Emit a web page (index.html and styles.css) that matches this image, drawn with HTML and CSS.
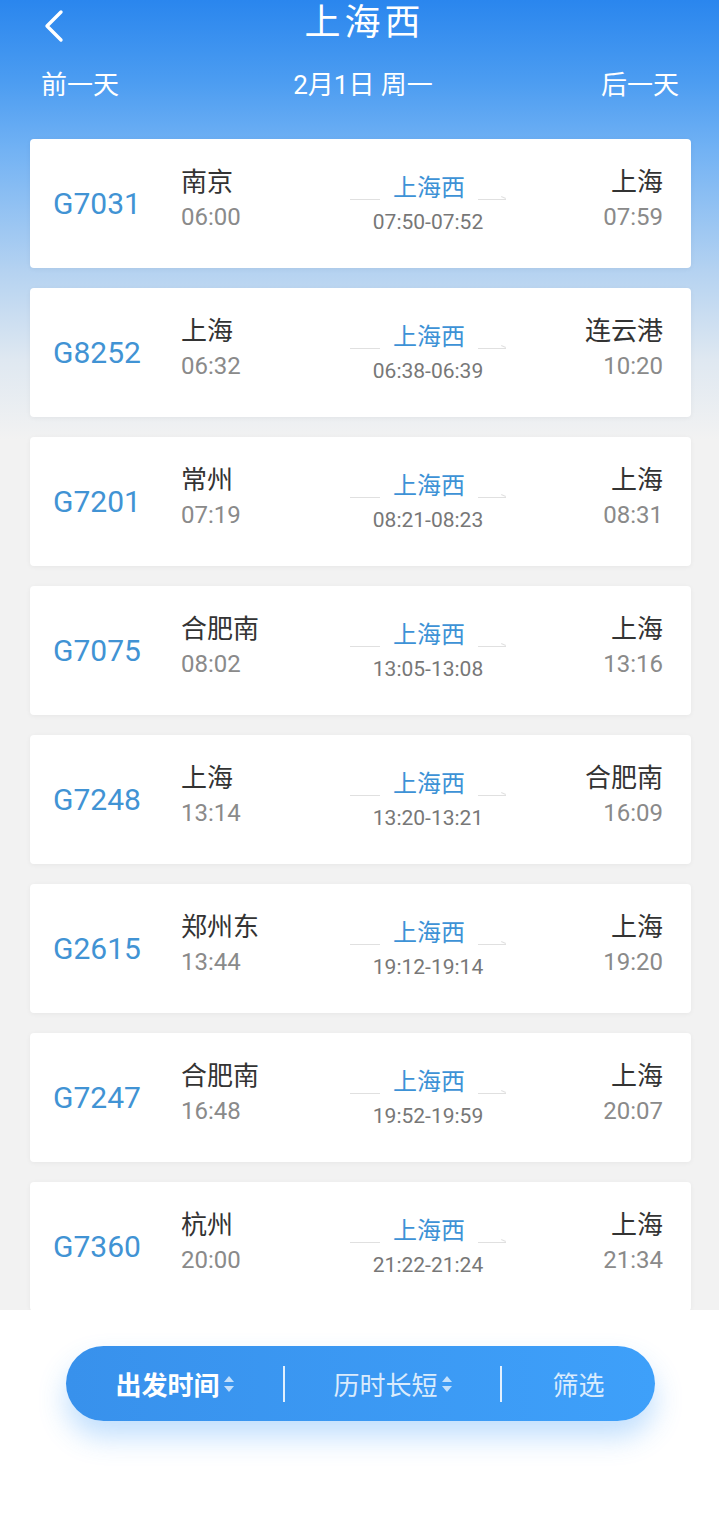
FILE: index.html
```html
<!DOCTYPE html>
<html>
<head>
  <meta charset="UTF-8">
  <title>上海西</title>
  <link rel="stylesheet" href="styles.css">
</head>
<body>
  <div class="page">
    <div class="header">
      <div class="title-row">
        <svg class="back" width="24" height="34" viewBox="0 0 24 34"><polyline points="19,3 5,17 19,31" fill="none" stroke="#fff" stroke-width="3.4" stroke-linecap="round" stroke-linejoin="round"/></svg>
        <h1>上海西</h1>
      </div>
      <div class="date-row">
        <span>前一天</span>
        <span class="date">2月1日 周一</span>
        <span>后一天</span>
      </div>
    </div>

    <div class="train-list">
      <div class="card">
        <div class="train-no">G7031</div>
        <div class="from"><p class="station">南京</p><p class="time">06:00</p></div>
        <div class="via"><div class="via-top"><span class="line"></span><span class="via-name">上海西</span><span class="line arrow"></span></div><p class="via-time">07:50-07:52</p></div>
        <div class="to"><p class="station">上海</p><p class="time">07:59</p></div>
      </div>
      <div class="card">
        <div class="train-no">G8252</div>
        <div class="from"><p class="station">上海</p><p class="time">06:32</p></div>
        <div class="via"><div class="via-top"><span class="line"></span><span class="via-name">上海西</span><span class="line arrow"></span></div><p class="via-time">06:38-06:39</p></div>
        <div class="to"><p class="station">连云港</p><p class="time">10:20</p></div>
      </div>
      <div class="card">
        <div class="train-no">G7201</div>
        <div class="from"><p class="station">常州</p><p class="time">07:19</p></div>
        <div class="via"><div class="via-top"><span class="line"></span><span class="via-name">上海西</span><span class="line arrow"></span></div><p class="via-time">08:21-08:23</p></div>
        <div class="to"><p class="station">上海</p><p class="time">08:31</p></div>
      </div>
      <div class="card">
        <div class="train-no">G7075</div>
        <div class="from"><p class="station">合肥南</p><p class="time">08:02</p></div>
        <div class="via"><div class="via-top"><span class="line"></span><span class="via-name">上海西</span><span class="line arrow"></span></div><p class="via-time">13:05-13:08</p></div>
        <div class="to"><p class="station">上海</p><p class="time">13:16</p></div>
      </div>
      <div class="card">
        <div class="train-no">G7248</div>
        <div class="from"><p class="station">上海</p><p class="time">13:14</p></div>
        <div class="via"><div class="via-top"><span class="line"></span><span class="via-name">上海西</span><span class="line arrow"></span></div><p class="via-time">13:20-13:21</p></div>
        <div class="to"><p class="station">合肥南</p><p class="time">16:09</p></div>
      </div>
      <div class="card">
        <div class="train-no">G2615</div>
        <div class="from"><p class="station">郑州东</p><p class="time">13:44</p></div>
        <div class="via"><div class="via-top"><span class="line"></span><span class="via-name">上海西</span><span class="line arrow"></span></div><p class="via-time">19:12-19:14</p></div>
        <div class="to"><p class="station">上海</p><p class="time">19:20</p></div>
      </div>
      <div class="card">
        <div class="train-no">G7247</div>
        <div class="from"><p class="station">合肥南</p><p class="time">16:48</p></div>
        <div class="via"><div class="via-top"><span class="line"></span><span class="via-name">上海西</span><span class="line arrow"></span></div><p class="via-time">19:52-19:59</p></div>
        <div class="to"><p class="station">上海</p><p class="time">20:07</p></div>
      </div>
      <div class="card">
        <div class="train-no">G7360</div>
        <div class="from"><p class="station">杭州</p><p class="time">20:00</p></div>
        <div class="via"><div class="via-top"><span class="line"></span><span class="via-name">上海西</span><span class="line arrow"></span></div><p class="via-time">21:22-21:24</p></div>
        <div class="to"><p class="station">上海</p><p class="time">21:34</p></div>
      </div>
    </div>

    <div class="footer">
      <div class="sort-bar">
        <div class="sort-item first active">出发时间<svg class="updown" width="10" height="20" viewBox="0 0 10 20"><polygon points="0,8 5,2 10,8" /><polygon points="0,12 5,18 10,12" /></svg></div>
        <span class="divider"></span>
        <div class="sort-item second">历时长短<svg class="updown" width="10" height="20" viewBox="0 0 10 20"><polygon points="0,8 5,2 10,8" /><polygon points="0,12 5,18 10,12" /></svg></div>
        <span class="divider"></span>
        <div class="sort-item third">筛选</div>
      </div>
    </div>
  </div>
</body>
</html>
```

FILE: styles.css
```css
body { margin: 0; font-family: Roboto, "Noto Sans CJK SC", sans-serif; background: #fff; }
p { margin: 0; }
.page { width: 719px; background: linear-gradient(180deg, #2a86ee 0, #4b9cf1 80px, #72b2f4 150px, #b4d2f1 270px, #dfe8f1 360px, #f2f2f2 440px, #f2f2f2 100%); }

.header { height: 97px; color: #fff; }
.title-row { height: 46px; display: flex; align-items: center; justify-content: center; position: relative; }
.title-row h1 { margin: 0 0 0 10px; font-size: 36px; font-weight: 400; letter-spacing: 4px; line-height: 46px; }
.back { position: absolute; left: 42px; top: 9px; }
.date-row { margin-top: 21px; height: 30px; display: flex; justify-content: space-between; align-items: center; padding: 0 40px 0 41px; font-size: 26px; }
.date-row .date { margin-left: 6px; }

.train-list { height: 1213px; box-sizing: border-box; padding: 42px 28px 0 30px; overflow: hidden; display: flex; flex-direction: column; gap: 20px; }
.card { flex: none; height: 129px; background: #fff; border-radius: 4px; box-shadow: 0 1px 5px rgba(0, 0, 0, 0.05); display: flex; align-items: flex-start; padding: 0 28px 0 23px; box-sizing: border-box; }
.train-no { width: 128px; align-self: center; font-size: 30px; color: #4193d4; }
.from { width: 157px; padding-top: 26px; }
.station { font-size: 26px; color: #333; line-height: 34px; }
.time { font-size: 24px; color: #8a8a8a; line-height: 36px; }
.via { width: 180px; padding-top: 33px; display: flex; flex-direction: column; align-items: center; }
.via-top { display: flex; align-items: flex-end; }
.line { width: 30px; height: 1px; background: #e0e0e0; margin-bottom: 4px; }
.line.arrow { width: 28px; position: relative; }
.line.arrow::after { content: ""; position: absolute; right: 0; top: -2px; width: 5px; height: 1px; background: #e0e0e0; transform: rotate(25deg); }
.via-name { font-size: 24px; color: #3d92d6; line-height: 32px; margin: 0 13px; }
.via-time { font-size: 21px; color: #777; line-height: 36px; }
.to { flex: 1; padding-top: 26px; text-align: right; }

.footer { background: #fff; height: 207px; padding-top: 36px; box-sizing: border-box; }
.sort-bar { width: 589px; height: 75px; margin-left: 66px; border-radius: 38px; background: linear-gradient(90deg, #3891ec, #3ea0fa); box-shadow: 0 16px 28px rgba(50, 150, 250, 0.3); display: flex; align-items: center; color: rgba(255, 255, 255, 0.82); font-size: 26px; }
.sort-item { display: flex; align-items: center; justify-content: center; }
.sort-item.first { width: 217px; }
.sort-item.second { width: 215px; }
.sort-item.third { flex: 1; }
.sort-item.active { color: #fff; font-weight: 700; }
.updown { margin-left: 4px; fill: rgba(255, 255, 255, 0.7); }
.divider { width: 2px; height: 36px; background: rgba(255, 255, 255, 0.85); }
```
